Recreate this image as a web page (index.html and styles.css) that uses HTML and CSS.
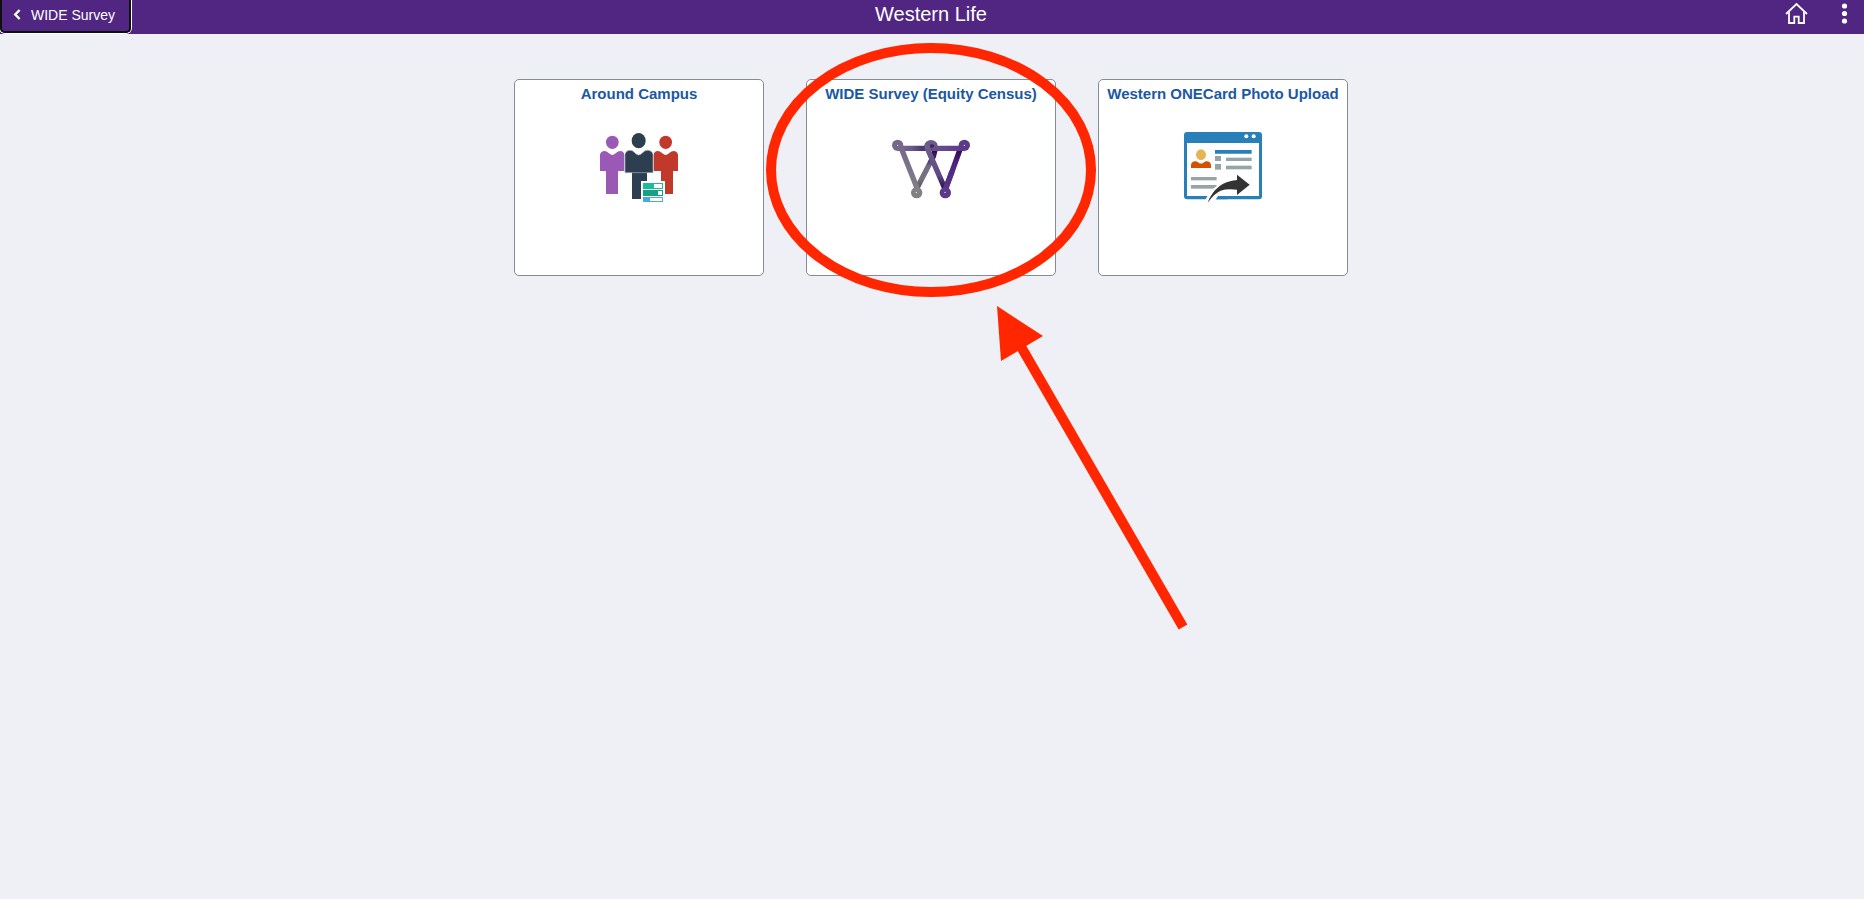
FILE: index.html
```html
<!DOCTYPE html>
<html lang="en">
<head>
    <meta charset="UTF-8">
    <meta name="viewport" content="width=device-width, initial-scale=1.0">
    <title>Western Life</title>
    <link rel="stylesheet" href="styles.css">
</head>
<body>
    <header class="banner">
        <button type="button" class="back">
            <svg width="8" height="11" viewBox="0 0 8 11" aria-hidden="true">
                <path d="M6.6 1 L2.2 5.5 L6.6 10" fill="none" stroke="#fff" stroke-width="2.4"/>
            </svg>
            WIDE Survey
        </button>
        <h1>Western Life</h1>
        <div class="actions">
            <button type="button" class="icon-button" aria-label="Home">
                <svg width="24" height="24" viewBox="0 0 24 24" fill="none" stroke="#fff" stroke-width="1.8" aria-hidden="true">
                    <path d="M1 12 L11.5 2 L22 12"/>
                    <path d="M4 10 V21 H9.3 V14.7 H13.7 V21 H19 V10"/>
                </svg>
            </button>
            <button type="button" class="icon-button" aria-label="Actions">
                <svg width="24" height="24" viewBox="0 0 24 24" fill="#fff" aria-hidden="true">
                    <circle cx="11.5" cy="4" r="2.6"/>
                    <circle cx="11.5" cy="11.5" r="2.6"/>
                    <circle cx="11.5" cy="19" r="2.6"/>
                </svg>
            </button>
        </div>
    </header>

    <main>
        <ul class="tiles">
            <li>
                <a class="tile" href="#campus">
                    <h2>Around Campus</h2>
                    <svg class="tile-icon" viewBox="27 30 240 225" aria-hidden="true">
                        <!-- left person -->
                        <g fill="#9b59b6">
                            <ellipse cx="67" cy="67" rx="19" ry="20"/>
                            <path d="M30 153 V104 Q33 93 43 93 Q50 93 56 99 Q63 105 67 105 Q71 105 78 99 Q84 93 91 93 Q101 93 103 104 V153 H84 V222 H48 V153 Z"/>
                        </g>
                        <!-- right person -->
                        <g fill="#c0392b">
                            <ellipse cx="227" cy="67" rx="19" ry="20"/>
                            <path d="M191 153 V104 Q193 93 203 93 Q210 93 216 99 Q223 105 227 105 Q231 105 238 99 Q244 93 251 93 Q261 93 264 104 V153 H249 V222 H213 V153 Z"/>
                        </g>
                        <!-- middle person -->
                        <g fill="#2c3e50">
                            <ellipse cx="146" cy="62" rx="21" ry="23"/>
                            <path d="M126 156 H171 V237 H126 Z"/>
                            <path d="M105 158 V103 Q109 91 120 91 Q128 91 134 98 Q141 105 146 105 Q151 105 158 98 Q164 91 173 91 Q185 91 189 103 V158 Z" stroke="#a9b2ba" stroke-width="2"/>
                        </g>
                        <path d="M153 183 H225 V250 H153 Z" fill="#fff"/>
                        <path d="M159 189 H219 V207 H159 Z" fill="#1abc9c"/>
                        <path d="M192 192 H216 V204 H192 Z" fill="#fff"/>
                        <path d="M159 210 H219 V228 H159 Z" fill="#16a085"/>
                        <path d="M204 213 H216 V225 H204 Z" fill="#fff"/>
                        <path d="M159 231 H219 V246 H159 Z" fill="#48a9dc"/>
                        <path d="M180 234 H216 V243 H180 Z" fill="#fff"/>
                    </svg>
                </a>
            </li>
            <li class="highlighted">
                <a class="tile" href="#survey">
                    <h2>WIDE Survey (Equity Census)</h2>
                    <svg class="tile-icon" viewBox="33 0 240 225" aria-hidden="true">
                        <defs>
                            <linearGradient id="bar" gradientUnits="userSpaceOnUse" x1="53" y1="0" x2="253" y2="0">
                                <stop offset="0" stop-color="#76688a"/>
                                <stop offset=".2" stop-color="#6d5a8c"/>
                                <stop offset=".38" stop-color="#4b3670"/>
                                <stop offset=".55" stop-color="#6a5090"/>
                                <stop offset="1" stop-color="#5b3a87"/>
                            </linearGradient>
                            <linearGradient id="grey" gradientUnits="userSpaceOnUse" x1="0" y1="46" x2="0" y2="188">
                                <stop offset="0" stop-color="#76688a"/>
                                <stop offset="1" stop-color="#808085"/>
                            </linearGradient>
                            <linearGradient id="rise" gradientUnits="userSpaceOnUse" x1="0" y1="55" x2="0" y2="175">
                                <stop offset="0" stop-color="#26064f"/>
                                <stop offset=".25" stop-color="#3c2560"/>
                                <stop offset=".45" stop-color="#746b86"/>
                                <stop offset=".75" stop-color="#77737f"/>
                                <stop offset="1" stop-color="#57535c"/>
                            </linearGradient>
                            <linearGradient id="fall" gradientUnits="userSpaceOnUse" x1="0" y1="46" x2="0" y2="175">
                                <stop offset="0" stop-color="#6f6088"/>
                                <stop offset=".7" stop-color="#5f4786"/>
                                <stop offset="1" stop-color="#2a0f4d"/>
                            </linearGradient>
                            <linearGradient id="purple" gradientUnits="userSpaceOnUse" x1="0" y1="55" x2="0" y2="188">
                                <stop offset="0" stop-color="#2b0455"/>
                                <stop offset=".35" stop-color="#4d2480"/>
                                <stop offset="1" stop-color="#5b3a87"/>
                            </linearGradient>
                        </defs>
                        <g fill="none" stroke-width="16">
                            <ellipse cx="153" cy="47" rx="20" ry="17" fill="#6b5a88"/>
                            <path d="M167 52 L160 80 L109 178" stroke="url(#rise)"/>
                            <path d="M241 56 L196 180" stroke="url(#purple)"/>
                            <path d="M53 55 H253" stroke="url(#bar)"/>
                            <ellipse cx="155" cy="48" rx="8" ry="5" fill="#3f2863"/>
                            <path d="M142 44 Q141 54 145 62 L193 172" stroke="url(#fall)"/>
                            <path d="M62 50 L112 176" stroke="url(#grey)"/>
                            <path d="M216 124 L191 190" stroke="url(#purple)"/>
                        </g>
                        <circle cx="53" cy="46" r="17" fill="#76688a"/>
                        <circle cx="253" cy="46" r="17" fill="#5b3a87"/>
                        <circle cx="110" cy="188" r="17" fill="#808085"/>
                        <circle cx="196" cy="188" r="17" fill="#5b3a87"/>
                        <g fill="#fff">
                            <circle cx="53" cy="46" r="2"/>
                            <circle cx="253" cy="46" r="2"/>
                            <circle cx="109" cy="187" r="2"/>
                            <circle cx="195" cy="187" r="2"/>
                        </g>
                    </svg>
                </a>
                <svg class="callout" width="430" height="600" viewBox="0 0 430 600" aria-hidden="true">
                    <ellipse cx="165" cy="127" rx="160" ry="122" fill="none" stroke="#ff2600" stroke-width="10"/>
                    <path d="M231 263 L277 293 L235 318 Z" fill="#ff2600"/>
                    <path d="M254 302 L417 584" stroke="#ff2600" stroke-width="10"/>
                </svg>
            </li>
            <li>
                <a class="tile" href="#photo">
                    <h2>Western ONECard Photo Upload</h2>
                    <svg class="tile-icon" viewBox="27 24 240 225" aria-hidden="true">
                        <rect x="30" y="30" width="234" height="202" rx="9" fill="#2980b9"/>
                        <path d="M39 63 H255 V222 H39 Z" fill="#fff"/>
                        <circle cx="217" cy="43" r="6" fill="#fff"/>
                        <circle cx="239" cy="43" r="6" fill="#fff"/>
                        <ellipse cx="81" cy="98" rx="15" ry="16" fill="#e5b453"/>
                        <path d="M51 138 V128 Q54 118 64 118 Q69 118 74 122 Q81 127 88 122 Q93 118 98 118 Q108 118 111 128 V138 Z" fill="#d35400"/>
                        <path d="M123 84 H233 V95 H123 Z" fill="#2980b9"/>
                        <g fill="#95a5a6">
                            <path d="M123 102 H141 V117 H123 Z"/>
                            <path d="M123 126 H141 V143 H123 Z"/>
                            <path d="M156 107 H233 V117 H156 Z"/>
                            <path d="M156 131 H233 V142 H156 Z"/>
                            <path d="M51 165 H128 V175 H51 Z"/>
                            <path d="M51 189 H128 V200 H51 Z"/>
                        </g>
                        <path d="M94 234 Q106 208 128 192 L142 208 L124 234 Z" fill="#fff"/>
                        <path d="M135 222 H160 V232 H127 Z" fill="#2980b9"/>
                        <path d="M101 242 Q112 212 136 193 Q158 176 189 174 V158 L227 188 L189 219 V203 Q160 199 140 206 Q122 213 101 242 Z" fill="#333"/>
                    </svg>
                </a>
            </li>
        </ul>
    </main>
</body>
</html>
```
FILE: styles.css
```css
* {
    margin: 0;
    padding: 0;
    box-sizing: border-box;
}

body {
    min-height: 100vh;
    font-family: "Liberation Sans", Arial, sans-serif;
    background-color: #eff0f5;
}

.banner {
    display: grid;
    grid-template-columns: 1fr auto 1fr;
    align-items: start;
    height: 34px;
    padding-right: 2px;
    background-color: #512682;
    color: white;
}

.banner h1 {
    font-size: 20px;
    font-weight: normal;
    line-height: 28px;
}

button {
    font-family: inherit;
    color: white;
    background-color: transparent;
    border: none;
    cursor: pointer;
}

.back {
    display: flex;
    align-items: center;
    justify-self: start;
    gap: 10px;
    height: 33px;
    padding: 0 14px 2px 11px;
    font-size: 14px;
    border: 2px solid #101010;
    border-top: none;
    border-radius: 0 0 5px 5px;
    box-shadow: 0 0 0 1px white;
}

.actions {
    display: flex;
    justify-self: end;
    gap: 24px;
    padding: 2px 5px 0 0;
}

.icon-button svg {
    display: block;
}

.tiles {
    display: flex;
    flex-wrap: wrap;
    justify-content: center;
    gap: 42px;
    padding: 45px 10px 0 8px;
    list-style: none;
}

.tile {
    display: flex;
    flex-direction: column;
    align-items: center;
    gap: 27px;
    width: 250px;
    min-height: 197px;
    padding-top: 5px;
    background-color: white;
    border: 1px solid #838b93;
    border-radius: 5px;
    text-decoration: none;
}

.tile h2 {
    font-size: 15px;
    line-height: 18px;
    color: #1b58a3;
    white-space: nowrap;
}

.tile-icon {
    width: 80px;
    height: 75px;
}

.highlighted {
    position: relative;
}

/* circle and arrow drawn over the survey tile */
.callout {
    position: absolute;
    top: -36px;
    left: -40px;
    z-index: 1;
    pointer-events: none;
}
```
